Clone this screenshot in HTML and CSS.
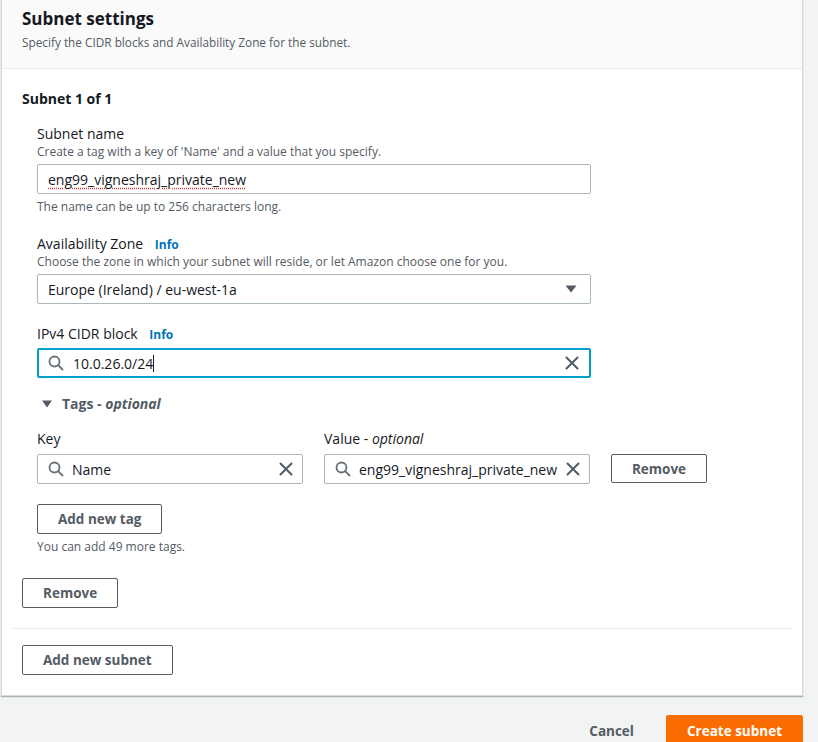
FILE: index.html
```html
<!DOCTYPE html>
<html>
<head>
<meta charset="utf-8">
<link rel="stylesheet" href="styles.css">
</head>
<body>
<div class="page">
  <div class="card">
    <div class="card-header">
      <h2 class="title">Subnet settings</h2>
      <div class="subtitle">Specify the CIDR blocks and Availability Zone for the subnet.</div>
    </div>
    <div class="card-body">
      <div class="subnet">
        <h3 class="subnet-title">Subnet 1 of 1</h3>
        <div class="fields">
          <div class="field field-first">
            <div class="label">Subnet name</div>
            <div class="desc">Create a tag with a key of 'Name' and a value that you specify.</div>
            <div class="input wide"><span class="spell">eng99_vigneshraj_private_new</span></div>
            <div class="constraint">The name can be up to 256 characters long.</div>
          </div>
          <div class="field field-az">
            <div class="label">Availability Zone <span class="info">Info</span></div>
            <div class="desc">Choose the zone in which your subnet will reside, or let Amazon choose one for you.</div>
            <div class="input wide select"><span class="grow">Europe (Ireland) / eu-west-1a</span>
              <svg class="caret" width="12" height="8" viewBox="0 0 12 8"><path d="M0.5 0.5 H11.5 L6 7.5 Z" fill="#545b64"/></svg>
            </div>
          </div>
          <div class="field">
            <div class="label">IPv4 CIDR block <span class="info">Info</span></div>
            <div class="input wide focus">
              <svg class="search" width="16" height="16" viewBox="0 0 16 16"><circle cx="6.5" cy="6.5" r="5" fill="none" stroke="#687078" stroke-width="1.8"/><path d="M10.2 10.2 L14.5 14.5" stroke="#687078" stroke-width="1.8" stroke-linecap="round"/></svg>
              <span class="grow">10.0.26.0/24<span class="cursor"></span></span>
              <svg class="clear" width="14" height="14" viewBox="0 0 14 14"><path d="M1.5 1.5 L12.5 12.5 M12.5 1.5 L1.5 12.5" stroke="#545b64" stroke-width="2" stroke-linecap="round"/></svg>
            </div>
          </div>
          <div class="tags-head">
            <svg class="tri" width="10" height="8" viewBox="0 0 10 8"><path d="M0 0.5 H10 L5 7.5 Z" fill="#545b64"/></svg>
            <span>Tags - <em>optional</em></span>
          </div>
          <div class="tag-row">
            <div class="tag-col">
              <div class="label">Key</div>
              <div class="input tag-input">
                <svg class="search" width="16" height="16" viewBox="0 0 16 16"><circle cx="6.5" cy="6.5" r="5" fill="none" stroke="#687078" stroke-width="1.8"/><path d="M10.2 10.2 L14.5 14.5" stroke="#687078" stroke-width="1.8" stroke-linecap="round"/></svg>
                <span class="grow">Name</span>
                <svg class="clear" width="14" height="14" viewBox="0 0 14 14"><path d="M1.5 1.5 L12.5 12.5 M12.5 1.5 L1.5 12.5" stroke="#545b64" stroke-width="2" stroke-linecap="round"/></svg>
              </div>
            </div>
            <div class="tag-col">
              <div class="label">Value - <em>optional</em></div>
              <div class="input tag-input">
                <svg class="search" width="16" height="16" viewBox="0 0 16 16"><circle cx="6.5" cy="6.5" r="5" fill="none" stroke="#687078" stroke-width="1.8"/><path d="M10.2 10.2 L14.5 14.5" stroke="#687078" stroke-width="1.8" stroke-linecap="round"/></svg>
                <span class="grow">eng99_vigneshraj_private_new</span>
                <svg class="clear" width="14" height="14" viewBox="0 0 14 14"><path d="M1.5 1.5 L12.5 12.5 M12.5 1.5 L1.5 12.5" stroke="#545b64" stroke-width="2" stroke-linecap="round"/></svg>
              </div>
            </div>
            <button class="btn tag-remove">Remove</button>
          </div>
          <button class="btn add-tag">Add new tag</button>
          <div class="constraint">You can add 49 more tags.</div>
        </div>
        <button class="btn subnet-remove">Remove</button>
      </div>
      <div class="divider"></div>
      <button class="btn add-subnet">Add new subnet</button>
    </div>
  </div>
  <div class="actions">
    <button class="link-btn">Cancel</button>
    <button class="btn primary">Create subnet</button>
  </div>
</div>
</body>
</html>
```

FILE: styles.css
```css
* { box-sizing: border-box; }
html, body { margin: 0; padding: 0; }
body {
  background: #f2f3f3;
  font-family: "Open Sans", "Liberation Sans", sans-serif;
  color: #16191f;
  font-size: 14px;
  overflow: hidden;
  height: 742px;
}
.page {
  padding: 0 15px 0 1px;
}
.card {
  background: #fff;
  border: 1px solid #d5dbdb;
  border-top: none;
  box-shadow: 0 1px 1px 0 rgba(0, 28, 36, 0.3);
}
.card-header {
  background: #fafafa;
  border-bottom: 1px solid #eaeded;
  padding: 8px 20px 18px;
}
.title {
  margin: 0;
  font-size: 17px;
  line-height: 22px;
  font-weight: 700;
}
.subtitle {
  margin-top: 4px;
  font-size: 11.8px;
  line-height: 16px;
  color: #545b64;
}
.card-body {
  padding: 20px 10px 20px 10px;
}
.subnet {
  padding: 0 10px;
}
.subnet-title {
  margin: 0;
  font-size: 14px;
  line-height: 20px;
  font-weight: 700;
}
.fields {
  padding-left: 15px;
}
.field { margin-top: 20px; }
.field-first { margin-top: 15px; }
.field-az { margin-top: 19px; }
.label {
  font-size: 14px;
  line-height: 20px;
  height: 20px;
  color: #16191f;
  white-space: nowrap;
}
.label em { font-style: italic; }
.info {
  font-size: 12px;
  line-height: 12px;
  font-weight: 700;
  color: #0073bb;
  margin-left: 8px;
}
.desc {
  font-size: 12px;
  line-height: 16px;
  color: #545b64;
}
.input {
  margin-top: 4px;
  height: 30px;
  border: 1px solid #aab7b8;
  border-radius: 2px;
  display: flex;
  align-items: center;
  padding: 0 9px 0 10px;
  font-size: 14px;
  color: #16191f;
  background: #fff;
}
.wide { width: 554px; }
.grow { flex: 1; white-space: nowrap; overflow: hidden; }
.spell {
  text-decoration: underline dotted #e0342a;
  text-underline-offset: 3px;
}
.constraint {
  margin-top: 5px;
  font-size: 12px;
  line-height: 16px;
  color: #545b64;
}
.select { padding-right: 13px; }
.caret { flex: none; }
.focus {
  border: 2px solid #00a1c9;
  padding: 0 10px 0 9px;
}
.search { flex: none; margin-right: 8px; }
.focus .search { margin-right: 9px; }
.clear { flex: none; margin-left: 6px; }
.cursor {
  display: inline-block;
  width: 1px;
  height: 17px;
  background: #16191f;
  vertical-align: -3px;
}
.tags-head {
  margin-top: 16px;
  display: flex;
  align-items: center;
  font-size: 14px;
  line-height: 20px;
  font-weight: 700;
  color: #545b64;
}
.tags-head em { font-style: italic; }
.tri { margin-left: 5px; margin-right: 10px; }
.tag-row {
  margin-top: 14px;
  display: flex;
  align-items: flex-end;
  gap: 21px;
}
.tag-col .label { height: 22px; line-height: 22px; }
.tag-input { width: 266px; }
.btn {
  font-family: inherit;
  font-size: 13.5px;
  font-weight: 700;
  color: #545b64;
  background: #fff;
  border: 1px solid #545b64;
  border-radius: 2px;
  height: 30px;
  padding: 0 20px;
  cursor: pointer;
  line-height: 20px;
}
.tag-remove { height: 29px; margin-bottom: 1px; width: 96px; padding: 0; }
.add-tag { margin-top: 20px; display: block; }
.subnet-remove { margin-top: 23px; display: block; }
.divider {
  margin-top: 20px;
  border-top: 1px solid #eaeded;
}
.add-subnet { margin: 16px 0 0 10px; display: block; }
.actions {
  margin-top: 19px;
  display: flex;
  justify-content: flex-end;
  align-items: center;
  gap: 12px;
}
.link-btn {
  font-family: inherit;
  font-size: 13.5px;
  font-weight: 700;
  color: #545b64;
  background: none;
  border: none;
  padding: 4px 20px;
}
.primary {
  background: #fb6c00;
  border-color: #fb6c00;
  color: #fff;
  height: 32px;
}
```
